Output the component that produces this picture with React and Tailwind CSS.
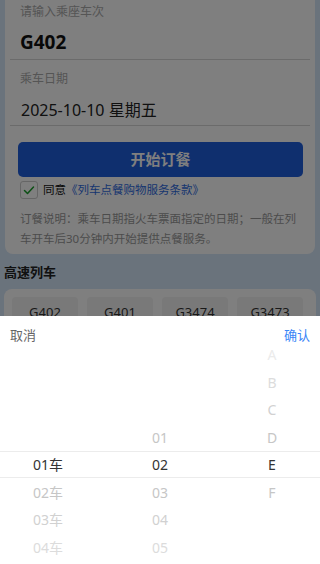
import React from 'react';

const trains = ['G402', 'G401', 'G3474', 'G3473'];

const shade = (d) => {
  if (d === 0) return 'text-[#333]';
  if (d === 1) return 'text-[#c6c6c6]';
  if (d === 2) return 'text-[#d1d1d1]';
  if (d === 3) return 'text-[#dcdcdc]';
  return 'text-[#ebebeb]';
};

const Column = ({ items, selected, lead }) => (
  <div className="flex flex-col mt-[-5.25px]">
    {Array.from({ length: lead }).map((_, i) => (
      <div key={'s' + i} className="h-[27.5px]" />
    ))}
    {items.map((it, i) => (
      <div key={it} className={`h-[27.5px] flex items-center justify-center text-[14px] ${shade(Math.abs(i - selected))}`}>
        {it}
      </div>
    ))}
  </div>
);

const App = () => {
  return (
    <div className="relative w-[320px] h-[564px] overflow-hidden bg-[#d4e6f8] font-['Noto_Sans','Noto_Sans_CJK_SC',sans-serif]">
      {/* form card */}
      <div className="mx-[5px] bg-white rounded-b-[8px] px-[5px] pb-[6px]">
        <div className="border-b border-[#d6d6d6] pb-[3px]">
          <div className="pl-[10px] pt-[4px] text-[12px] leading-[16px] text-[#aaa]">请输入乘座车次</div>
          <div className="pl-[10px] mt-[8px] text-[19px] leading-[28px] font-bold text-[#111]">G402</div>
        </div>
        <div className="border-b border-[#d6d6d6] pb-[3px]">
          <div className="pl-[10px] mt-[11px] text-[12px] leading-[16px] text-[#aaa]">乘车日期</div>
          <div className="pl-[11px] mt-[11px] text-[16px] leading-[24px] text-[#222]">2025-10-10 星期五</div>
        </div>
        <button className="mt-[16px] ml-[8px] w-[285px] h-[35px] rounded-[5px] bg-[#1f5edc] text-white text-[15px] font-bold">
          开始订餐
        </button>
        <div className="mt-[3px] flex items-center pl-[10px] h-[19px]">
          <div className="w-[18px] h-[18px] rounded-[3px] border border-[#ccc] bg-white flex items-center justify-center">
            <svg width="12" height="12" viewBox="0 0 12 12" fill="none">
              <polyline points="1.5,6.5 4.5,9.5 10.5,3" stroke="#19a02a" strokeWidth="1.5" strokeLinecap="round" strokeLinejoin="round" />
            </svg>
          </div>
          <span className="ml-[5px] text-[11.5px] text-[#111]">同意</span>
          <span className="text-[11.5px] text-[#2f6be0]">《列车点餐购物服务条款》</span>
        </div>
        <p className="mt-[10px] px-[10px] text-[11.5px] leading-[19.5px] text-[#999]">
          订餐说明：乘车日期指火车票面指定的日期；一般在列车开车后30分钟内开始提供点餐服务。
        </p>
      </div>

      <div className="mt-[9px] pl-[4px] text-[13px] leading-[18px] font-bold text-[#222]">高速列车</div>

      <div className="mt-[8px] mx-[4px] bg-white rounded-[8px] pt-[8px] pl-[8px] pb-[10px] flex gap-[9px]">
        {trains.map((t) => (
          <div key={t} className="w-[66px] h-[32px] rounded-[4px] bg-[#f2f2f2] flex items-center justify-center text-[13px] text-[#333]">
            {t}
          </div>
        ))}
      </div>

      {/* mask */}
      <div className="fixed inset-0 bg-black/50" />

      {/* picker popup */}
      <div className="fixed left-0 right-0 bottom-0 h-[248px] bg-white">
        <div className="h-[30px] flex justify-between px-[10px] pt-[10px] text-[13px] leading-[18px]">
          <span className="text-[#666]">取消</span>
          <span className="text-[#3a86f7]">确认</span>
        </div>
        <div className="relative h-[218px] overflow-hidden grid grid-cols-[96px_128px_96px]">
          <div className="absolute left-0 right-0 top-[104.75px] h-[27.5px] border-y border-[#ececec]" />
          <Column items={['01车', '02车', '03车', '04车']} selected={0} lead={4} />
          <Column items={['01', '02', '03', '04', '05']} selected={1} lead={3} />
          <Column items={['A', 'B', 'C', 'D', 'E', 'F']} selected={4} lead={0} />
        </div>
      </div>
    </div>
  );
};

export default App;
